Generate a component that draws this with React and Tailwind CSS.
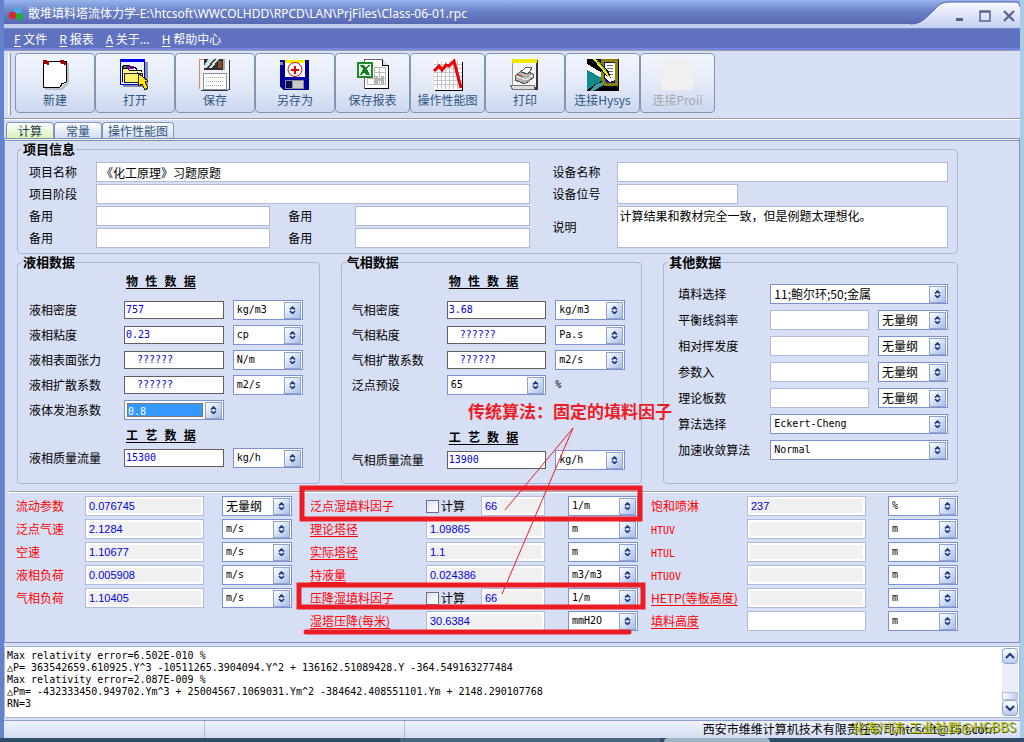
import React, { useId, useState } from 'react';
import clsx from 'clsx';

const MONO = 'font-["DejaVu_Sans_Mono","Noto_Sans_CJK_SC",monospace]';
const CJK = 'font-["Noto_Sans_CJK_SC",sans-serif]';
const SANS = 'font-["Liberation_Sans","Noto_Sans_CJK_SC",sans-serif]';

const hasChinese = (text) => /[\u4e00-\u9fff]/.test(text);

/* ---------- Icons ---------- */

const Icon = ({ children }) => (
    <svg width="32" height="32" viewBox="0 0 32 32" shapeRendering="crispEdges" aria-hidden="true">
        {children}
    </svg>
);

const NewIcon = () => (
    <Icon>
        <path d="M6 4h24v20l-7 7H6z" fill="#b9bfca" />
        <path d="M4.500 2.500h23v20l-6 6h-17z" fill="#fff" stroke="#000" />
        <path d="M27.500 23.500l-5 1-1 4" fill="#fff" stroke="#000" />
        <path d="M4 1h4v2h2v3H8V5H5V4H4zM21 1h4v2h2v3h-2V5h-3V4h-1z" fill="#a80000" />
    </Icon>
);

const OpenIcon = () => (
    <Icon>
        <path d="M4 3h25v25H4z" fill="#8a8fa0" />
        <path d="M1.500 1.500h24v24h-24z" fill="#eef2ff" stroke="#0000f0" />
        <path d="M1 0h25v3H1z" fill="#0000f0" />
        <path d="M4 6h6v3H4z" fill="#00b020" />
        <path d="M7 7h8v3H7z" fill="#9000b0" />
        <path d="M3.500 23v-14h4l2 2h13v2M3.500 9l1-3h6l1 2h5l1 3" fill="none" stroke="#000" />
        <path d="M4 10h4l2 2h12v11H5z" fill="#fff68c" />
        <path d="M5.500 23.500v-9h18v9z" fill="#f7ef70" stroke="#222" />
        <path d="M19 14l10 8-3 1 3 6-3 2-3-6-3 2z" fill="#ffe800" stroke="#222" strokeWidth="1" />
    </Icon>
);

const SaveIcon = () => (
    <Icon>
        <path d="M1.500 1.500h29v30h-28z" fill="#f4f5fb" />
        <path d="M.5 0v30M.5.5h4" stroke="#f08060" strokeWidth="1" />
        <path d="M30.500 1v29l-2 1.500H2" fill="none" stroke="#333a44" strokeWidth="1" />
        <path d="M5 0h20v11H5z" fill="#333" />
        <path d="M9 0h6L8 9H5V7zM17 0h3l-7 9h-3z" fill="#cfe0e0" />
        <path d="M19 2h4v7h-4z" fill="#8f4a20" />
        <path d="M24 0h2v11h-2z" fill="#9fb0b0" />
        <path d="M4.500 14.500h23v16h-23z" fill="#fff" stroke="#888f99" />
        <path d="M7 18.500h18M7 22.500h18M7 26.500h18" stroke="#a5a9b0" strokeDasharray="1 1" />
    </Icon>
);

const SaveAsIcon = () => (
    <Icon>
        <path d="M1 1h29v30H4l-3-3z" fill="#0000a0" />
        <path d="M1 3h3v3H1z" fill="#8a8fa0" />
        <path d="M6 1h20v4H6z" fill="#fff000" />
        <path d="M6 4h20v14H6z" fill="#fff" />
        <circle cx="16" cy="10.500" r="7" fill="#fff" stroke="#e00000" strokeWidth="1" shapeRendering="auto" />
        <path d="M15 7h2v3h3v2h-3v3h-2v-3h-3v-2h3z" fill="#e80000" />
        <path d="M6 21h19v9H6z" fill="#8c8c8c" />
        <path d="M7 22h6v7H7z" fill="#0a0a50" />
        <path d="M14 22h10v7H14z" fill="#c9c9c9" />
    </Icon>
);

const ExcelIcon = () => (
    <Icon>
        <path d="M7.500.5h18l6 6v23h-24z" fill="#fff" stroke="#666" />
        <path d="M25.500.5v6h6" fill="#ddd" stroke="#000" />
        <path d="M31.500 7v22.500H8" fill="none" stroke="#000" strokeWidth="1" />
        <path d="M17 8.500h11v17H10v-6M10 19.500h18M17 13.500h11M22.500 8v18M17.500 9v17" fill="none" stroke="#b9b9b9" />
        <path d="M18 17h3v3h3v-3h3v8h-3v-3h-3v3h-3z" fill="#b5b5b5" />
        <path d="M1 4h14v14H1z" fill="#e9f6e9" stroke="#1f8a2a" strokeWidth="2" />
        <path d="M3 6h4l2 3 2-3h2l-3 4 3 6H9l-2-3-2 3H3l3-6z" fill="#1a7a26" />
    </Icon>
);

const ChartIcon = () => (
    <Icon>
        <path d="M2 1h28v30H2z" fill="#fff" />
        <path
            d="M2 5.500h28M2 9.500h28M2 13.500h28M2 17.500h28M2 21.500h28M2 25.500h28M5.500 2v28M9.500 2v28M13.500 2v28M17.500 2v28M21.500 2v28M25.500 2v28"
            stroke="#c4c4c8"
        />
        <path d="M30.500 3v28H3" fill="none" stroke="#000" strokeWidth="1" />
        <path d="M2 12l5-5 3 4 4-5 3 1 5-5 7 27" fill="none" stroke="#f00000" strokeWidth="3" shapeRendering="auto" />
    </Icon>
);

const PrintIcon = () => (
    <Icon>
        <path d="M4 1h25v30H4z" fill="#333" />
        <path d="M3 0h24v28H3z" fill="#f3f3f3" />
        <path d="M3.500.5v26" stroke="#999" />
        <path d="M3 0h25v4H3z" fill="#f0e800" />
        <path d="M1.500 26.500h24v4h-22z" fill="#ddd" stroke="#777" />
        <path d="M6 17l8-6 10 4v4l-8 6-10-4z" fill="#b4b4b4" stroke="#555" />
        <path d="M12 13l5-5 6 1-4 6z" fill="#fff" stroke="#555" />
        <path d="M7 17l10 4 7-5" fill="none" stroke="#eee" />
        <path d="M9 16h3v1H9z" fill="#f00000" />
        <path d="M12 17h2v1h-2z" fill="#00a000" />
    </Icon>
);

const HysysIcon = () => (
    <Icon>
        <path d="M0 0h32v32H0z" fill="#000" />
        <path d="M0 5l22 13-4 3L0 12z" fill="#fff" />
        <path d="M0 11l17 9L0 31z" fill="#108a8a" />
        <path d="M8 26l16-7-5 6-13 7H2z" fill="#3aa0a0" />
        <path d="M15.500 1.500h14v24h-11l-3-6z" fill="#101090" stroke="#8a8200" strokeWidth="3" />
        <path d="M18 4h10v17l-5 2-5-4z" fill="#fff" />
        <path d="M20 6.500h6M20 9.500h6M20 12.500h6M20 15.500h6" stroke="#707070" />
        <path d="M3 0h7l12 13 2 6-6-3z" fill="#000" />
        <path d="M7 0l12 14 3 4" fill="none" stroke="#f0e800" strokeWidth="2" />
        <path d="M10 1l10 12" fill="none" stroke="#60b040" />
    </Icon>
);

const BlankIcon = () => (
    <Icon>
        <path d="M0 0h31v31H0z" fill="#f0f0f1" />
    </Icon>
);

/* ---------- Form controls ---------- */

const SpinGlyph = () => (
    <span className="pointer-events-none flex size-[17px] shrink-0 items-center justify-center self-center border border-[#8fa3cf] bg-gradient-to-br from-white to-[#a9bde6]">
        <svg width="7" height="8" viewBox="0 0 7 8" aria-hidden="true">
            <path d="M1 3.500L3.500 1 6 3.500M1 5l2.500 2.500L6 5" fill="none" stroke="#1f3a7c" strokeWidth="1.600" />
        </svg>
    </span>
);

const Combo = ({ value, label, id, className = '', selected = false }) => (
    <div className={clsx('relative flex h-5 min-w-0 border border-[#7b91d2] bg-white pr-px', className)}>
        <select
            id={id}
            aria-label={label}
            className={clsx(
                'min-w-0 flex-1 appearance-none outline-none',
                hasChinese(value) ? `text-xs leading-4 ${CJK}` : `text-[10px] leading-4 ${MONO}`,
                selected
                    ? 'm-0.5 border border-dotted border-[#c05800] bg-[#3399ff] text-white'
                    : 'bg-white pl-[3px] text-black'
            )}
        >
            <option>{value}</option>
        </select>
        <SpinGlyph />
    </div>
);

const PlainInput = ({ id, value = '', label, className = '' }) => (
    <input
        id={id}
        aria-label={label}
        defaultValue={value}
        className={clsx('h-5 min-w-0 border border-[#b0bbdc] bg-white px-1 text-xs text-black outline-none', CJK, className)}
    />
);

const DataRow = ({ label, value, unit, combo, suffix, selected }) => {
    const id = useId();
    return (
        <div className="flex h-5 items-center">
            <label htmlFor={id} className="w-[95px] shrink-0">{label}</label>
            {combo ? (
                <Combo id={id} value={value} selected={selected} className="flex-1" />
            ) : (
                <input
                    id={id}
                    defaultValue={value}
                    className={clsx(
                        'h-[18px] min-w-0 flex-1 border border-[#606060] bg-white pb-0.5 text-[10px] text-[#0000e0] outline-none',
                        MONO,
                        value.startsWith('?') ? 'pl-3' : 'pl-px'
                    )}
                />
            )}
            <div className={clsx('ml-[9px] w-[70px] shrink-0 text-[10px]', MONO)}>
                {unit ? <Combo value={unit} label={`${label}单位`} /> : suffix}
            </div>
        </div>
    );
};

const SubHeading = ({ children, className = '' }) => (
    <h3 className={clsx('ml-[97px] h-4 text-xs leading-4 font-bold whitespace-pre underline underline-offset-2', MONO, className)}>
        {children}
    </h3>
);

const Group = ({ title, className = '', children }) => (
    <fieldset className={clsx('min-w-0 rounded border border-[#aab6d8]', className)}>
        <legend className="ml-1 px-px text-[13px] leading-4 font-bold">{title}</legend>
        {children}
    </fieldset>
);

const OtherRow = ({ label, value, unit }) => {
    const id = useId();
    return (
        <div className="flex h-5 items-center">
            <label htmlFor={id} className="w-[92px] shrink-0">{label}</label>
            {value ? (
                <Combo id={id} value={value} className="flex-1" />
            ) : (
                <>
                    <PlainInput id={id} className="flex-1" />
                    <Combo value={unit} label={`${label}单位`} className="ml-[9px] w-[70px]" />
                </>
            )}
        </div>
    );
};

const ResultRow = ({ label, value, unit, linked, check, editable, labelWidth, gap }) => {
    const id = useId();
    const [checked, setChecked] = useState(false);
    return (
        <div className="flex h-5 items-center">
            <div className={clsx('shrink-0 whitespace-nowrap text-[#ff0000]', labelWidth)}>
                {linked ? (
                    <a href="#result" className="underline underline-offset-2">{label}</a>
                ) : (
                    <label htmlFor={id} className={hasChinese(label) ? '' : `text-[10px] ${MONO}`}>{label}</label>
                )}
            </div>
            {check && (
                <label className="flex w-[55px] shrink-0 items-center gap-0.5">
                    <input
                        type="checkbox"
                        checked={checked}
                        onChange={() => setChecked(!checked)}
                        className="size-[13px] appearance-none border border-[#5b7496] bg-gradient-to-br from-[#dfe2e8] to-white"
                    />
                    计算
                </label>
            )}
            <input
                id={id}
                aria-label={label}
                readOnly={!editable}
                defaultValue={value}
                className={clsx(
                    'h-5 min-w-0 flex-1 border border-[#b0bbdc] px-[3px] text-[11px] text-[#0000e0] outline-none',
                    SANS,
                    editable ? 'bg-white' : 'bg-[#f0f0f0] inset-ring-2 inset-ring-white'
                )}
            />
            <Combo value={unit} label={`${label}单位`} className={clsx('w-[70px] shrink-0', gap)} />
        </div>
    );
};

/* ---------- Data ---------- */

const menus = [
    { hotkey: 'F', text: '文件' },
    { hotkey: 'R', text: '报表' },
    { hotkey: 'A', text: '关于...' },
    { hotkey: 'H', text: '帮助中心' },
];

const tools = [
    { text: '新建', icon: NewIcon, width: 'w-20' },
    { text: '打开', icon: OpenIcon, width: 'w-20' },
    { text: '保存', icon: SaveIcon, width: 'w-20' },
    { text: '另存为', icon: SaveAsIcon, width: 'w-20' },
    { text: '保存报表', icon: ExcelIcon, width: 'w-[75px]' },
    { text: '操作性能图', icon: ChartIcon, width: 'w-[75px]' },
    { text: '打印', icon: PrintIcon, width: 'w-20' },
    { text: '连接Hysys', icon: HysysIcon, width: 'w-[75px]' },
    { text: '连接Proii', icon: BlankIcon, width: 'w-[75px]', disabled: true },
];

const liquidRows = [
    { label: '液相密度', value: '757', unit: 'kg/m3' },
    { label: '液相粘度', value: '0.23', unit: 'cp' },
    { label: '液相表面张力', value: '??????', unit: 'N/m' },
    { label: '液相扩散系数', value: '??????', unit: 'm2/s' },
    { label: '液体发泡系数', value: '0.8', combo: true, selected: true },
];

const gasRows = [
    { label: '气相密度', value: '3.68', unit: 'kg/m3' },
    { label: '气相粘度', value: '??????', unit: 'Pa.s' },
    { label: '气相扩散系数', value: '??????', unit: 'm2/s' },
    { label: '泛点预设', value: '65', combo: true, suffix: '%' },
];

const otherRows = [
    { label: '填料选择', value: '11;鲍尔环;50;金属' },
    { label: '平衡线斜率', unit: '无量纲' },
    { label: '相对挥发度', unit: '无量纲' },
    { label: '参数入', unit: '无量纲' },
    { label: '理论板数', unit: '无量纲' },
    { label: '算法选择', value: 'Eckert-Cheng' },
    { label: '加速收敛算法', value: 'Normal' },
];

const leftResults = [
    { label: '流动参数', value: '0.076745', unit: '无量纲' },
    { label: '泛点气速', value: '2.1284', unit: 'm/s' },
    { label: '空速', value: '1.10677', unit: 'm/s' },
    { label: '液相负荷', value: '0.005908', unit: 'm/s' },
    { label: '气相负荷', value: '1.10405', unit: 'm/s' },
];

const midResults = [
    { label: '泛点湿填料因子', value: '66', unit: '1/m', check: true },
    { label: '理论塔径', value: '1.09865', unit: 'm', linked: true },
    { label: '实际塔径', value: '1.1', unit: 'm', linked: true },
    { label: '持液量', value: '0.024386', unit: 'm3/m3', linked: true },
    { label: '压降湿填料因子', value: '66', unit: '1/m', linked: true, check: true },
    { label: '湿塔压降(每米)', value: '30.6384', unit: 'mmH2O', linked: true },
];

const rightResults = [
    { label: '饱和喷淋', value: '237', unit: '%' },
    { label: 'HTUV', unit: 'm' },
    { label: 'HTUL', unit: 'm' },
    { label: 'HTUOV', unit: 'm' },
    { label: 'HETP(等板高度)', unit: 'm', linked: true },
    { label: '填料高度', unit: 'm', linked: true, editable: true },
];

const log = `Max relativity error=6.502E-010 %
△P= 363542659.610925.Y^3 -10511265.3904094.Y^2 + 136162.51089428.Y -364.549163277484
Max relativity error=2.087E-009 %
△Pm= -432333450.949702.Ym^3 + 25004567.1069031.Ym^2 -384642.408551101.Ym + 2148.290107768
RN=3`;

/* ---------- Window parts ---------- */

const TitleBar = () => (
    <header className="relative flex h-7 items-center justify-between border-b-4 border-[#c4cff0] bg-gradient-to-b from-[#98b4ec] via-[#6a7fc6] to-[#5868b2]">
        <div className="flex items-center gap-1 pt-1 pl-1">
            <svg width="16" height="16" viewBox="0 0 16 16" aria-hidden="true">
                <rect x="6" y="1" width="7" height="7" rx="2" fill="#4fa8e8" />
                <rect x="1" y="6" width="7" height="7" rx="2" fill="#d82a2a" />
                <rect x="8" y="7" width="7" height="7" rx="2" fill="#1fae3c" />
            </svg>
            <h1 className='font-["Noto_Sans","Noto_Sans_CJK_SC",sans-serif] text-xs leading-5 text-white'>
                散堆填料塔流体力学-E:\htcsoft\WWCOLHDD\RPCD\LAN\PrjFiles\Class-06-01.rpc
            </h1>
        </div>
        <svg className="absolute top-0 right-0" width="110" height="28" viewBox="0 0 110 28" aria-hidden="true">
            <defs>
                <linearGradient id="cap" x1="0" y1="0" x2="0" y2="1">
                    <stop offset="0" stopColor="#fafbff" />
                    <stop offset="1" stopColor="#c4cff0" />
                </linearGradient>
            </defs>
            <path d="M0 24c12 0 15-6 22-12C28 6 30 2 40 2h65q5 0 5 5v21H0z" fill="url(#cap)" />
            <path d="M0 24c12 0 15-6 22-12C28 6 30 2 40 2h65q5 0 5 5" fill="none" stroke="#4a5cac" />
        </svg>
        <div className="relative flex items-center gap-2 pt-2 pr-[3px] text-[#56648e]">
            <button type="button" aria-label="最小化" className="flex size-4 items-center justify-center">
                <svg width="12" height="12" viewBox="0 0 12 12"><path d="M1 8h7v3H1z" fill="currentColor" /></svg>
            </button>
            <button type="button" aria-label="最大化" className="flex size-4 items-center justify-center">
                <svg width="12" height="12" viewBox="0 0 12 12">
                    <path d="M1 1h10v10H1zM1 2h10" fill="none" stroke="currentColor" strokeWidth="1.500" />
                </svg>
            </button>
            <button type="button" aria-label="关闭" className="flex size-4 items-center justify-center">
                <svg width="12" height="12" viewBox="0 0 12 12">
                    <path d="M1 1l10 10M11 1L1 11" fill="none" stroke="currentColor" strokeWidth="2.200" />
                </svg>
            </button>
        </div>
    </header>
);

// Red callout: two frames, an underline and the leader lines from the caption
const Callout = () => (
    <div className="pointer-events-none absolute top-0 left-0">
        <svg
            className="absolute top-0 left-0 overflow-visible"
            width="660"
            height="504"
            viewBox="5 139 660 504"
            fill="none"
            stroke="#ed1c24"
            aria-hidden="true"
        >
            <path d="M302 488h338v31H302z" strokeWidth="5" />
            <path d="M299 585h344v22H299z" strokeWidth="5" />
            <path d="M306 632h323" strokeWidth="5" strokeLinecap="round" />
            <path d="M573 428l-68 82M573 428l-71 166" strokeWidth="1" />
        </svg>
        <p className="absolute top-[260px] left-[463px] text-[17px] leading-6 font-bold whitespace-nowrap text-[#ed1c24]">
            传统算法：固定的填料因子
        </p>
    </div>
);

const App = () => {
    const [tab, setTab] = useState('计算');

    return (
        <div className={clsx('flex min-h-screen flex-col bg-[#415f80] text-xs text-black', CJK)}>
            <div className="flex flex-1 flex-col border-r-4 border-l-4 border-r-[#a9cbe6] border-l-[#6583cc] bg-[#d7dff4]">
                <TitleBar />

                {/* Menu */}
                <nav className="flex h-[22px] items-center gap-3 border-t border-b-2 border-t-[#7488d0] border-b-[#7186e4] bg-[#6071c0] pl-2.5 text-white">
                    {menus.map((menu) => (
                        <button key={menu.hotkey} type="button" className="leading-4">
                            <span className="underline underline-offset-2">{menu.hotkey}</span> {menu.text}
                        </button>
                    ))}
                </nav>

                {/* Toolbar */}
                <div className="flex h-[69px] items-start border-t border-b border-t-[#9a9aa4] border-b-[#9a9aa4] pt-0.5 pl-1">
                    <div className="mr-1 h-[62px] w-[3px] border-r border-l border-r-[#9a9aa4] border-l-white" />
                    {tools.map(({ text, icon: ToolIcon, width, disabled }) => (
                        <button
                            key={text}
                            type="button"
                            disabled={disabled}
                            className={clsx(
                                'flex h-[60px] flex-col items-center rounded border border-[#8097ae] bg-gradient-to-b from-[#f2f5fd] via-[#e4eaf8] to-[#ccd7ef] pt-[5px]',
                                width,
                                disabled ? 'text-[#a6a6aa]' : 'text-[#2e567e]'
                            )}
                        >
                            <ToolIcon />
                            <span className="pt-px leading-4">{text}</span>
                        </button>
                    ))}
                </div>

                {/* Tabs */}
                <div role="tablist" className="flex items-end border-t border-white pt-0.5 pl-0.5">
                    {['计算', '常量', '操作性能图'].map((name) => (
                        <button
                            key={name}
                            role="tab"
                            type="button"
                            aria-selected={tab === name}
                            onClick={() => setTab(name)}
                            className={clsx(
                                'h-4 rounded-t-sm border border-b-0 border-[#8097b8] leading-[15px]',
                                name.length > 2 ? 'px-[5px]' : 'px-[11px]',
                                tab === name
                                    ? 'bg-gradient-to-b from-white to-[#d9f2b4] text-[#1c3d4f]'
                                    : 'bg-gradient-to-b from-white to-[#d3dcf2] text-[#2e567e]'
                            )}
                        >
                            {name}
                        </button>
                    ))}
                </div>

                {/* Calculation page */}
                <main className="relative border border-[#7f92c8] pr-[61px] pb-[11px] pl-3">
                    <div className="-mr-[61px] -ml-3 h-0.5 border-b border-[#7f92c8] bg-[#f0f8c8]" />

                    <Group title="项目信息">
                        <div className="grid grid-cols-[500fr_395fr] gap-[23px] pt-[5px] pr-[9px] pb-[5px] pl-[11px]">
                            <div className="flex min-w-0 flex-col gap-0.5">
                                <div className="flex items-center">
                                    <label htmlFor="project-name" className="w-[67px]">项目名称</label>
                                    <PlainInput id="project-name" value="《化工原理》习题原题" className="flex-1" />
                                </div>
                                <div className="flex items-center">
                                    <label htmlFor="project-stage" className="w-[67px]">项目阶段</label>
                                    <PlainInput id="project-stage" className="flex-1" />
                                </div>
                                {[1, 2].map((row) => (
                                    <div key={row} className="flex items-center">
                                        <label htmlFor={`spare-a${row}`} className="w-[67px]">备用</label>
                                        <PlainInput id={`spare-a${row}`} className="flex-1" />
                                        <label htmlFor={`spare-b${row}`} className="ml-[18px] w-[67px]">备用</label>
                                        <PlainInput id={`spare-b${row}`} className="flex-1" />
                                    </div>
                                ))}
                            </div>
                            <div className="flex min-w-0 flex-col gap-0.5">
                                <div className="flex items-center">
                                    <label htmlFor="device-name" className="w-16">设备名称</label>
                                    <PlainInput id="device-name" className="flex-1" />
                                </div>
                                <div className="flex items-center">
                                    <label htmlFor="device-no" className="w-16">设备位号</label>
                                    <PlainInput id="device-no" className="w-[121px]" />
                                </div>
                                <div className="flex flex-1 items-center">
                                    <label htmlFor="notes" className="w-16">说明</label>
                                    <textarea
                                        id="notes"
                                        defaultValue="计算结果和教材完全一致，但是例题太理想化。"
                                        className="h-full min-w-0 flex-1 resize-none border border-[#b0bbdc] bg-white px-0.5 py-px leading-4 outline-none"
                                    />
                                </div>
                            </div>
                        </div>
                    </Group>

                    <div className="grid grid-cols-[303fr_302fr_295fr] gap-[21px]">
                        <Group title="液相数据" className="pb-[15px]">
                            <div className="pt-1 pr-4 pl-[11px]">
                                <SubHeading>物 性 数 据</SubHeading>
                                <div className="flex flex-col gap-[5px] pt-2.5">
                                    {liquidRows.map((row) => <DataRow key={row.label} {...row} />)}
                                </div>
                                <SubHeading className="mt-2 mb-1">工 艺 数 据</SubHeading>
                                <DataRow label="液相质量流量" value="15300" unit="kg/h" />
                            </div>
                        </Group>

                        <Group title="气相数据">
                            <div className="pt-1 pr-4 pl-2.5">
                                <SubHeading>物 性 数 据</SubHeading>
                                <div className="flex flex-col gap-[5px] pt-2.5">
                                    {gasRows.map((row) => <DataRow key={row.label} {...row} />)}
                                </div>
                                <SubHeading className="mt-[35px] mb-1">工 艺 数 据</SubHeading>
                                <DataRow label="气相质量流量" value="13900" unit="kg/h" />
                            </div>
                        </Group>

                        <Group title="其他数据">
                            <div className="flex flex-col gap-1.5 pt-3.5 pr-[9px] pl-3.5">
                                {otherRows.map((row) => <OtherRow key={row.label} {...row} />)}
                            </div>
                        </Group>
                    </div>

                    <div className="mt-[7px] -ml-2 h-0.5 border-t border-[#a4a4a8] bg-white" />

                    {/* Results */}
                    <div className="-ml-px grid grid-cols-[276fr_346fr_320fr] pt-[3px]">
                        <div className="flex min-w-0 flex-col gap-[3px]">
                            {leftResults.map((row) => (
                                <ResultRow key={row.label} {...row} labelWidth="w-[69px]" gap="ml-[18px]" />
                            ))}
                        </div>
                        <div className="flex min-w-0 flex-col gap-[3px] pl-[18px]">
                            {midResults.map((row) => (
                                <ResultRow key={row.label} {...row} labelWidth="w-[116px]" gap="ml-[23px]" />
                            ))}
                        </div>
                        <div className="flex min-w-0 flex-col gap-[3px] pl-[13px]">
                            {rightResults.map((row) => (
                                <ResultRow key={row.label} {...row} labelWidth="w-24" gap="ml-[22px]" />
                            ))}
                        </div>
                    </div>

                    <Callout />
                </main>

                {/* Log */}
                <div className="mt-[3px] flex flex-1 border border-[#a9b5d6] bg-white">
                    <textarea
                        aria-label="计算日志"
                        readOnly
                        rows={5}
                        wrap="off"
                        defaultValue={log}
                        className={clsx('min-w-0 flex-1 resize-none overflow-hidden px-0.5 pt-[3px] text-[10px] leading-3 outline-none', MONO)}
                    />
                    <div className="m-px flex w-4 flex-col bg-[#e9edfa]">
                        <button type="button" aria-label="向上滚动" className="flex h-4 items-center justify-center rounded-sm border border-[#8fa3cf] bg-gradient-to-b from-white to-[#b9caec]">
                            <svg width="10" height="8" viewBox="0 0 10 8"><path d="M1 6l4-4 4 4" fill="none" stroke="#1f3a6c" strokeWidth="2" /></svg>
                        </button>
                        <div className="flex-1" />
                        <div className="h-2 border border-[#b0bfe2] bg-gradient-to-r from-white to-[#bccbee]" />
                        <button type="button" aria-label="向下滚动" className="flex h-4 items-center justify-center rounded-sm border border-[#8fa3cf] bg-gradient-to-b from-white to-[#b9caec]">
                            <svg width="10" height="8" viewBox="0 0 10 8"><path d="M1 2l4 4 4-4" fill="none" stroke="#1f3a6c" strokeWidth="2" /></svg>
                        </button>
                    </div>
                </div>

                {/* Status bar */}
                <footer className="relative mt-0.5 flex h-[18px] border-t border-[#8d9fce] bg-gradient-to-b from-[#f0f3fc] to-[#d3dcf2] leading-4">
                    <div className="w-[201px] border-r border-[#b4bfdc]" />
                    <div className="w-[200px] border-r border-[#b4bfdc]" />
                    <div className="flex-1 pr-6 text-right">西安市维维计算机技术有限责任公司,htcsoft@163.com</div>
                    <span className="absolute -top-0.5 right-1 text-[13px] leading-4 text-[#c3cf1c] [text-shadow:1px_1px_0_#55591c]">
                        化海川流-工业社群@HGBBS
                    </span>
                </footer>
            </div>

            <div className="flex h-1 gap-1 bg-[#2f4d68] pl-[400px]">
                <div className="w-[260px] bg-[#48657f]" />
                <div className="w-[106px] rounded-t-sm bg-[#9db3c6]" />
            </div>
        </div>
    );
};

export default App;
